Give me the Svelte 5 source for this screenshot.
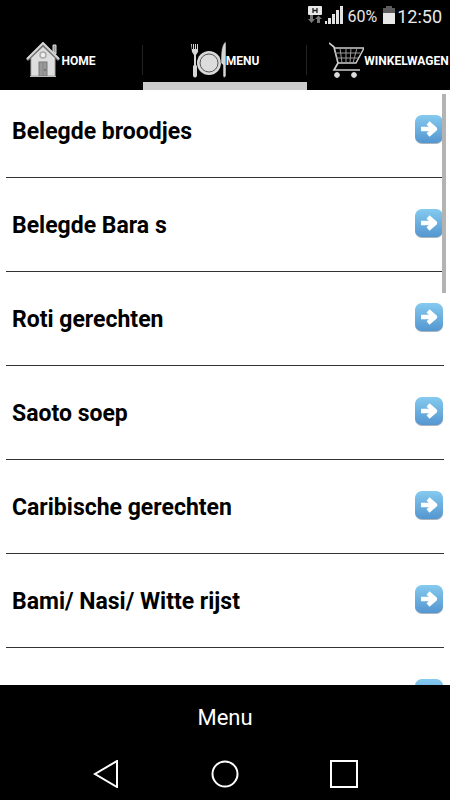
<script lang="ts">
    let categories = [
        'Belegde broodjes',
        'Belegde Bara s',
        'Roti gerechten',
        'Saoto soep',
        'Caribische gerechten',
        'Bami/ Nasi/ Witte rijst',
        ''
    ];

    let activeTab = 'menu';
</script>

<div class="screen">
    <header class="status">
        <svg class="network" width="16" height="18" viewBox="0 0 16 18">
            <rect x="1" y="0" width="14" height="9" rx="1" fill="#e8e8e8" />
            <path d="M6 2v5M10 2v5M6 4.500h4" stroke="#222" stroke-width="1.300" fill="none" />
            <path d="M3 9h3v4h2l-3.500 4L1 13h2zM10 17v-4H8l3.500-3.500L15 13h-2v4z" fill="#777" />
        </svg>
        <svg width="18" height="18" viewBox="0 0 18 18" fill="#e2e2e2">
            <rect x="0" y="15" width="2" height="3" />
            <rect x="3" y="12" width="3" height="6" />
            <rect x="7" y="8" width="3" height="10" />
            <rect x="11" y="4" width="3" height="14" />
            <rect x="15" y="0" width="3" height="18" />
        </svg>
        <span class="percent">60%</span>
        <svg class="battery" width="12" height="18" viewBox="0 0 12 18">
            <path d="M0 2h3V0h6v2h3v6H0z" fill="#5c5c5c" />
            <rect x="0" y="7" width="12" height="11" fill="#e8e8e8" />
        </svg>
        <span class="clock">12:50</span>
    </header>

    <nav class="tabs">
        <button class="tab" class:active={activeTab === 'home'} on:click={() => (activeTab = 'home')}>
            <svg width="35" height="36" viewBox="0 0 35 36">
                <path d="M27 3h3v9l-3-3z" fill="#999" stroke="#ddd" stroke-width="1" />
                <path d="M5 16L17 4l12 12v18H5z" fill="#dedede" stroke="#aaa" stroke-width="1" />
                <path d="M1 18L17 3l16 15" fill="none" stroke="#777" stroke-width="3" />
                <path d="M1 17L17 1l16 16" fill="none" stroke="#d8d8d8" stroke-width="2" />
                <circle cx="17" cy="13" r="3" fill="#eee" stroke="#aaa" stroke-width="1.500" />
                <rect x="13" y="20" width="8" height="14" fill="#999" stroke="#777" />
                <path d="M17 21v12" stroke="#858585" />
                <circle cx="19" cy="28" r="0.800" fill="#444" />
                <path d="M4 34.500h26" stroke="#bbb" />
            </svg>
            <span>HOME</span>
        </button>
        <button class="tab" class:active={activeTab === 'menu'} on:click={() => (activeTab = 'menu')}>
            <svg width="35" height="36" viewBox="0 0 35 36">
                <path d="M0 2h1v5h1V2h1v5h1V2h1v5h1V2h1v8l-2 3v10l1 1v10q-2 3-4 0V24l1-1V13l-2-3z" fill="#d6d6d6" />
                <circle cx="18" cy="21" r="12" fill="#d8d8d8" />
                <circle cx="18" cy="21" r="9" fill="#dcdcdc" stroke="#555" stroke-width="1" />
                <path d="M30 16q0-12 4-16h1v34q-2 3-3 0V23l-2-2z" fill="#d6d6d6" stroke="#000" stroke-width="0.500" />
            </svg>
            <span>MENU</span>
        </button>
        <button class="tab" class:active={activeTab === 'cart'} on:click={() => (activeTab = 'cart')}>
            <svg width="35" height="36" viewBox="0 0 35 36" fill="none" stroke="#ccc">
                <path d="M0 1l5 4 4 16-4 7h26" stroke-width="1.700" />
                <path d="M5 6h30l-8 15H8" stroke-width="1.500" />
                <path d="M6 11h25M7 16h22M11 6l2 15M17 6v15M22 6l-1 15M28 6l-4 15" stroke="#999" stroke-width="1" />
                <circle cx="8" cy="33" r="2.400" fill="#ddd" stroke="#ddd" />
                <circle cx="25" cy="33" r="2.400" fill="#ddd" stroke="#ddd" />
            </svg>
            <span>WINKELWAGEN</span>
        </button>
    </nav>

    <main>
        <ul class="list">
            {#each categories as category}
                <li>
                    <button class="row">
                        <span>{category}</span>
                        <svg width="30" height="30" viewBox="0 0 30 30">
                            <defs>
                                <linearGradient id="arrow-bg" x1="0" y1="0" x2="0" y2="1">
                                    <stop offset="0" stop-color="#85caef" />
                                    <stop offset="1" stop-color="#5496d0" />
                                </linearGradient>
                            </defs>
                            <rect x="1" y="2" width="28" height="28" rx="7" fill="#a9b4bd" />
                            <rect x="1" y="1" width="28" height="28" rx="7" fill="url(#arrow-bg)" />
                            <path d="M7 15h13M14 9l7 6-7 6" fill="none" stroke="#fff" stroke-width="4.500" stroke-linejoin="round" />
                        </svg>
                    </button>
                </li>
            {/each}
        </ul>
        <div class="scrollbar"></div>
    </main>

    <footer>
        <h1>Menu</h1>
        <div class="keys">
            <button aria-label="Back">
                <svg width="28" height="28" viewBox="0 0 28 28"><path d="M25 1v26L3 14z" /></svg>
            </button>
            <button aria-label="Home">
                <svg width="28" height="28" viewBox="0 0 28 28"><circle cx="14" cy="14" r="12.500" /></svg>
            </button>
            <button aria-label="Recent">
                <svg width="28" height="28" viewBox="0 0 28 28"><rect x="1" y="1" width="26" height="26" /></svg>
            </button>
        </div>
    </footer>
</div>

<style>
    .screen {
        display: flex;
        flex-direction: column;
        height: 100vh;
        overflow: hidden;
        background: #fff;
        font-family: Roboto, "Liberation Sans", sans-serif;
    }

    svg {
        display: block;
        flex: none;
    }

    button {
        padding: 0;
        border: none;
        background: none;
        font: inherit;
        color: inherit;
        cursor: pointer;
    }

    .status {
        display: flex;
        flex: none;
        align-items: center;
        justify-content: flex-end;
        height: 32px;
        padding-right: 8px;
        background: #000;
        color: #e8e8e8;
    }

    .network {
        margin-right: 2px;
    }

    .network,
    .network + svg {
        margin-bottom: 2px;
    }

    .percent {
        margin: 0 6px 0 4px;
        font-size: 16px;
    }

    .battery {
        margin-right: 2px;
        margin-bottom: 2px;
    }

    .clock {
        font-size: 18px;
    }

    .tabs {
        display: flex;
        flex: none;
        justify-content: center;
        height: 58px;
        overflow: hidden;
        background: #000;
        color: #fff;
    }

    .tab {
        display: flex;
        flex: none;
        align-items: center;
        justify-content: center;
        width: 164px;
        border-bottom: 8px solid #000;
        background: linear-gradient(#222, #222) right 13px / 1px 30px no-repeat;
        font-size: 12px;
        font-weight: 700;
        box-sizing: border-box;
    }

    .tab svg {
        margin-top: 6px;
    }

    .tab span {
        margin-top: 8px;
    }

    .tab.active {
        border-bottom-color: #ccc;
    }

    main {
        position: relative;
        flex: 1;
        min-height: 0;
    }

    .list {
        display: flex;
        flex-direction: column;
        gap: 6px;
        height: 100%;
        margin: 0;
        padding: 0 6px;
        overflow-y: auto;
        scrollbar-width: none;
        list-style: none;
        box-sizing: border-box;
    }

    .row {
        display: flex;
        align-items: center;
        justify-content: space-between;
        width: 100%;
        height: 88px;
        padding: 0 0 4px 6px;
        border-bottom: 1px solid #333;
        font-size: 23px;
        font-weight: 700;
        text-align: left;
        box-sizing: border-box;
    }

    .row svg {
        margin-bottom: 6px;
    }

    .scrollbar {
        position: absolute;
        top: 4px;
        right: 4px;
        width: 4px;
        height: 199px;
        background: #b3b3b3;
    }

    footer {
        flex: none;
        background: #000;
        color: #fff;
    }

    h1 {
        margin: 0;
        font-size: 22px;
        font-weight: 400;
        line-height: 66px;
        text-align: center;
    }

    .keys {
        display: flex;
        justify-content: center;
        gap: 91px;
        height: 40px;
        padding-top: 9px;
        align-items: flex-start;
    }

    .keys svg {
        fill: none;
        stroke: #fff;
        stroke-width: 2;
    }
</style>
